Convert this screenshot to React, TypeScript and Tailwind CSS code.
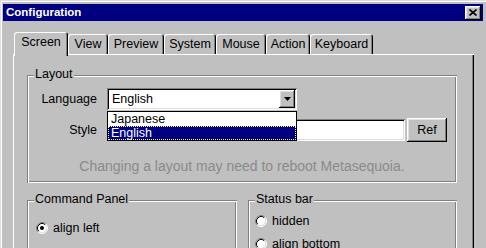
import React from "react";

const raised =
  "shadow-[inset_-1px_-1px_0_#000,inset_1px_1px_0_#fff,inset_-2px_-2px_0_#808080,inset_2px_2px_0_#dfdfdf]";
const sunken =
  "shadow-[inset_1px_1px_0_#808080,inset_-1px_-1px_0_#fff,inset_2px_2px_0_#000,inset_-2px_-2px_0_#dfdfdf]";
const etched =
  "shadow-[inset_1px_1px_0_#808080,inset_2px_2px_0_#fff,inset_-1px_-1px_0_#fff,inset_-2px_-2px_0_#808080]";

const tabs = [
  { label: "Screen", w: "w-[54px]", active: true },
  { label: "View", w: "w-[40px]" },
  { label: "Preview", w: "w-[56px]" },
  { label: "System", w: "w-[52px]" },
  { label: "Mouse", w: "w-[50px]" },
  { label: "Action", w: "w-[44px]" },
  { label: "Keyboard", w: "w-[63px]" },
];

const Radio = ({ checked }: { checked?: boolean }) => (
  <svg width="12" height="12" viewBox="0 0 12 12" className="shrink-0">
    <circle cx="6" cy="6" r="5" fill="#fff" />
    <path d="M9.89 2.11 A5.5 5.5 0 0 0 2.11 9.89" fill="none" stroke="#808080" />
    <path d="M2.11 9.89 A5.5 5.5 0 0 0 9.89 2.11" fill="none" stroke="#fff" />
    <path d="M9.18 2.82 A4.5 4.5 0 0 0 2.82 9.18" fill="none" stroke="#000" />
    <path d="M2.82 9.18 A4.5 4.5 0 0 0 9.18 2.82" fill="none" stroke="#dfdfdf" />
    {checked && <circle cx="6" cy="6" r="2" fill="#000" />}
  </svg>
);

const GroupBox = ({ title, className, children }: { title: string; className: string; children: React.ReactNode }) => (
  <div className={`relative ${etched} ${className}`}>
    <span className="absolute left-[7px] -top-[8px] bg-[#c0c0c0] px-[1px] leading-[15px]">{title}</span>
    {children}
  </div>
);

export default function App() {
  return (
    <div className="w-[486px] h-[248px] overflow-hidden bg-[#c0c0c0] text-[12.5px] text-black font-['Liberation_Sans',Arial,sans-serif] pt-[4px] shadow-[inset_1px_1px_0_#dfdfdf,inset_2px_2px_0_#fff]">
      {/* title bar */}
      <div className="mx-[3px] h-[17px] bg-[#000080] flex items-center justify-between pl-[3px] pr-[2px]">
        <span className="text-white font-bold text-[11.5px] leading-none">Configuration</span>
        <div className={`w-[16px] h-[14px] bg-[#c0c0c0] flex items-center justify-center ${raised}`}>
          <svg width="8" height="7" viewBox="0 0 8 7">
            <path d="M0.5 0.5 L7.5 6.5 M7.5 0.5 L0.5 6.5" stroke="#000" strokeWidth="1.6" />
          </svg>
        </div>
      </div>

      {/* tabs */}
      <div className="mt-[11px] h-[22px] pl-[14px] flex items-end">
        {tabs.map((t) => (
          <div
            key={t.label}
            className={`${t.w} ${
              t.active ? "h-[24px] -mb-[2px] relative z-10 pb-[3px]" : "h-[20px]"
            } bg-[#c0c0c0] rounded-t-[3px] flex items-center justify-center shadow-[inset_1px_1px_0_#fff,inset_-1px_0_0_#000,inset_-2px_0_0_#808080]`}
          >
            {t.label}
          </div>
        ))}
      </div>

      {/* panel */}
      <div className="ml-[13px] w-[461px] h-[200px] pt-[21px] pl-[14px] shadow-[inset_1px_1px_0_#fff,inset_-1px_0_0_#000,inset_-2px_0_0_#808080]">
        <GroupBox title="Layout" className="w-[430px] h-[108px] pt-[13px]">
          <div className="flex items-center h-[22px]">
            <span className="w-[70px] text-right">Language</span>
            <div className={`relative ml-[10px] w-[190px] h-[22px] bg-white ${sunken} flex items-center pl-[5px]`}>
              English
              <div className={`absolute right-[2px] top-[2px] w-[16px] h-[18px] bg-[#c0c0c0] ${raised} flex items-center justify-center`}>
                <svg width="7" height="4" viewBox="0 0 7 4">
                  <path d="M0 0 H7 L3.5 4 Z" fill="#000" />
                </svg>
              </div>
              {/* open list */}
              <div className="absolute left-0 top-[23px] w-[190px] h-[30px] bg-white border border-black z-20 flex flex-col">
                <div className="h-[14px] leading-[14px] pl-[3px]">Japanese</div>
                <div className="h-[14px] leading-[12px] pl-[2px] bg-[#000080] text-white border border-dotted border-[#ffffc0]">
                  English
                </div>
              </div>
            </div>
          </div>
          <div className="flex items-center mt-[8px]">
            <span className="w-[70px] text-right">Style</span>
            <div className={`ml-[10px] w-[298px] h-[22px] bg-white ${sunken}`} />
            <div className={`ml-[2px] w-[40px] h-[24px] ${raised} flex items-center justify-center`}>Ref</div>
          </div>
          <div className="mt-[16px] text-center text-[14px] leading-[16px] text-[#8a8a8a]">
            Changing a layout may need to reboot Metasequoia.
          </div>
        </GroupBox>

        <div className="mt-[17px] flex gap-[11px]">
          <GroupBox title="Command Panel" className="w-[210px] h-[60px] pt-[21px] pl-[9px]">
            <div className="flex items-center gap-[5px] h-[14px]">
              <Radio checked />
              <span>align left</span>
            </div>
          </GroupBox>
          <GroupBox title="Status bar" className="w-[209px] h-[60px] pt-[14px] pl-[7px]">
            <div className="flex items-center gap-[5px] h-[14px]">
              <Radio />
              <span>hidden</span>
            </div>
            <div className="flex items-center gap-[5px] h-[14px] mt-[9px]">
              <Radio />
              <span>align bottom</span>
            </div>
          </GroupBox>
        </div>
      </div>
    </div>
  );
}
